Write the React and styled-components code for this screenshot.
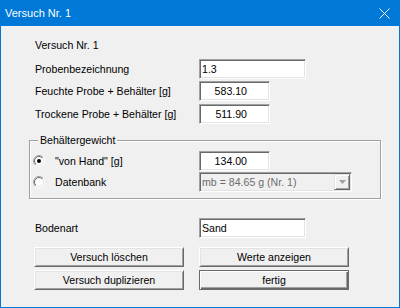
import React from 'react';
import styled, { createGlobalStyle } from 'styled-components';

const GlobalStyle = createGlobalStyle`
  html, body {
    margin: 0;
    padding: 0;
    background: #f0f0f0;
  }
  body {
    font-family: "Liberation Sans", Arial, sans-serif;
    font-size: 10.6px;
    color: #000;
  }
`;

const Window = styled.div`
  width: 400px;
  height: 308px;
  box-sizing: border-box;
  border: 1px solid #0078d7;
  border-top: none;
  background: #f0f0f0;
  display: flex;
  flex-direction: column;
`;

const TitleBar = styled.div`
  height: 26px;
  flex: none;
  background: #0078d7;
  color: #fff;
  display: flex;
  align-items: center;
  justify-content: space-between;
  padding: 0 9px 0 4px;
  font-size: 11px;
`;

const Content = styled.div`
  display: flex;
  flex-direction: column;
  padding: 0 18px 0 28px;
`;

const Heading = styled.div`
  height: 20px;
  line-height: 20px;
  margin-top: 9px;
  padding-left: 6px;
`;

const FieldRow = styled.div`
  display: grid;
  grid-template-columns: 164px auto;
  align-items: center;
  height: 20px;
  padding-left: 6px;
  margin-top: ${(p) => p.$mt || 0}px;
`;

const Label = styled.span`
  white-space: nowrap;
`;

const Input = styled.input`
  box-sizing: border-box;
  width: ${(p) => p.$w}px;
  height: 20px;
  margin: 0;
  padding: 0 ${(p) => (p.$right ? 22 : 2)}px 0 2px;
  font-family: "Liberation Sans", Arial, sans-serif;
  font-size: 10.6px;
  color: #000;
  text-align: ${(p) => (p.$right ? 'right' : 'left')};
  background: #fff;
  border-style: solid;
  border-width: 1px;
  border-color: #a0a0a0 #fff #fff #a0a0a0;
  box-shadow: inset 1px 1px #696969, inset -1px -1px #e3e3e3;
  outline: none;
`;

const Group = styled.div`
  position: relative;
  margin-top: 16px;
  border: 1px solid #a0a0a0;
  box-shadow: inset 1px 1px #fff, 1px 1px #fff;
  padding: 10px 0 6px 0;
  display: flex;
  flex-direction: column;
  gap: 1px;
`;

const Legend = styled.span`
  position: absolute;
  top: -8px;
  left: 8px;
  line-height: 14px;
  padding: 0 2px;
  background: #f0f0f0;
`;

const GroupRow = styled.div`
  display: grid;
  grid-template-columns: 169px auto;
  align-items: center;
  height: 20px;
`;

const RadioItem = styled.label`
  display: flex;
  align-items: center;
  gap: 10px;
  padding-left: 3px;
`;

const Select = styled.div`
  box-sizing: border-box;
  width: 153px;
  height: 20px;
  display: flex;
  align-items: center;
  justify-content: space-between;
  padding: 0 1px 0 2px;
  color: #6d6d6d;
  background: #f0f0f0;
  border-style: solid;
  border-width: 1px;
  border-color: #a0a0a0 #fff #fff #a0a0a0;
  box-shadow: inset 1px 1px #696969, inset -1px -1px #e3e3e3;
`;

const DropButton = styled.span`
  box-sizing: border-box;
  width: 16px;
  height: 16px;
  display: flex;
  align-items: center;
  justify-content: center;
  background: #f0f0f0;
  border-style: solid;
  border-width: 1px;
  border-color: #e3e3e3 #696969 #696969 #e3e3e3;
  box-shadow: inset 1px 1px #fff, inset -1px -1px #a0a0a0;
`;

const Buttons = styled.div`
  display: grid;
  grid-template-columns: 150px 150px;
  column-gap: 15px;
  row-gap: 3px;
  margin: 9px 0 0 5px;
`;

const Button = styled.button`
  box-sizing: border-box;
  height: 20px;
  margin: 0;
  padding: 0;
  font-family: "Liberation Sans", Arial, sans-serif;
  font-size: 10.6px;
  color: #000;
  background: #f0f0f0;
  border-style: solid;
  border-width: 1px;
  border-color: ${(p) =>
    p.$default ? '#696969' : '#fff #696969 #696969 #fff'};
  box-shadow: ${(p) =>
    p.$default
      ? 'inset 1px 1px #fff, inset -1px -1px #696969, inset -2px -2px #a0a0a0'
      : 'inset 1px 1px #e3e3e3, inset -1px -1px #a0a0a0'};
`;

function Radio({ id, checked }) {
  return (
    <svg width="12" height="12" viewBox="0 0 12 12">
      <defs>
        <linearGradient id={`o${id}`} x1="0" y1="0" x2="1" y2="1">
          <stop offset="0.5" stopColor="#a0a0a0" />
          <stop offset="0.5" stopColor="#fff" />
        </linearGradient>
        <linearGradient id={`i${id}`} x1="0" y1="0" x2="1" y2="1">
          <stop offset="0.5" stopColor="#696969" />
          <stop offset="0.5" stopColor="#e3e3e3" />
        </linearGradient>
      </defs>
      <circle cx="6" cy="6" r="5.5" fill="none" stroke={`url(#o${id})`} />
      <circle cx="6" cy="6" r="4.5" fill="#fff" stroke={`url(#i${id})`} />
      {checked && <circle cx="6" cy="6" r="2" fill="#000" />}
    </svg>
  );
}

export default function App() {
  return (
    <Window>
      <GlobalStyle />
      <TitleBar>
        <span>Versuch Nr. 1</span>
        <svg width="11" height="11" viewBox="0 0 11 11">
          <path d="M0.5 0.5L10.5 10.5M10.5 0.5L0.5 10.5" stroke="#fff" strokeWidth="1" />
        </svg>
      </TitleBar>
      <Content>
        <Heading>Versuch Nr. 1</Heading>
        <FieldRow $mt={4}>
          <Label>Probenbezeichnung</Label>
          <Input $w={107} readOnly value="1.3" />
        </FieldRow>
        <FieldRow $mt={2}>
          <Label>Feuchte Probe + Behälter [g]</Label>
          <Input $w={71} $right readOnly value="583.10" />
        </FieldRow>
        <FieldRow $mt={3}>
          <Label>Trockene Probe + Behälter [g]</Label>
          <Input $w={71} $right readOnly value="511.90" />
        </FieldRow>

        <Group>
          <Legend>Behältergewicht</Legend>
          <GroupRow>
            <RadioItem>
              <Radio id="r1" checked />
              <span>"von Hand" [g]</span>
            </RadioItem>
            <Input $w={71} $right readOnly value="134.00" />
          </GroupRow>
          <GroupRow>
            <RadioItem>
              <Radio id="r2" />
              <span>Datenbank</span>
            </RadioItem>
            <Select>
              <span>mb = 84.65 g (Nr. 1)</span>
              <DropButton>
                <svg width="7" height="4" viewBox="0 0 7 4">
                  <path d="M0 0H7L3.5 4Z" fill="#a0a0a0" />
                </svg>
              </DropButton>
            </Select>
          </GroupRow>
        </Group>

        <FieldRow $mt={19}>
          <Label>Bodenart</Label>
          <Input $w={107} readOnly value="Sand" />
        </FieldRow>

        <Buttons>
          <Button>Versuch löschen</Button>
          <Button>Werte anzeigen</Button>
          <Button>Versuch duplizieren</Button>
          <Button $default>fertig</Button>
        </Buttons>
      </Content>
    </Window>
  );
}
